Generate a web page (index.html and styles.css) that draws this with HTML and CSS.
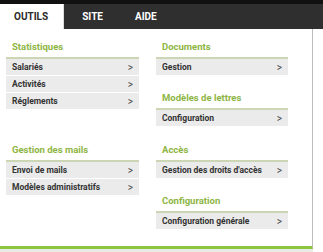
FILE: index.html
```html
<!DOCTYPE html>
<html lang="fr">
<head>
    <meta charset="UTF-8">
    <title>Menu</title>
    <link rel="stylesheet" href="styles.css">
</head>
<body>
<div class="topbar">
    <div class="nav">
        <a class="nav-tab active" href="#">OUTILS</a>
        <a class="nav-tab" href="#">SITE</a>
        <a class="nav-tab" href="#">AIDE</a>
    </div>
</div>
<div class="panel">
    <div class="menu-grid">
        <div class="menu-col">
            <div class="menu-section">
                <div class="menu-title">Statistiques</div>
                <a class="menu-item" href="#"><span>Salariés</span><span class="arrow">&gt;</span></a>
                <a class="menu-item" href="#"><span>Activités</span><span class="arrow">&gt;</span></a>
                <a class="menu-item" href="#"><span>Réglements</span><span class="arrow">&gt;</span></a>
            </div>
        </div>
        <div class="menu-col">
            <div class="menu-section">
                <div class="menu-title">Documents</div>
                <a class="menu-item" href="#"><span>Gestion</span><span class="arrow">&gt;</span></a>
            </div>
            <div class="menu-section">
                <div class="menu-title">Modèles de lettres</div>
                <a class="menu-item" href="#"><span>Configuration</span><span class="arrow">&gt;</span></a>
            </div>
        </div>
        <div class="menu-col">
            <div class="menu-section">
                <div class="menu-title">Gestion des mails</div>
                <a class="menu-item" href="#"><span>Envoi de mails</span><span class="arrow">&gt;</span></a>
                <a class="menu-item" href="#"><span>Modèles administratifs</span><span class="arrow">&gt;</span></a>
            </div>
        </div>
        <div class="menu-col">
            <div class="menu-section">
                <div class="menu-title">Accès</div>
                <a class="menu-item" href="#"><span>Gestion des droits d'accès</span><span class="arrow">&gt;</span></a>
            </div>
            <div class="menu-section">
                <div class="menu-title">Configuration</div>
                <a class="menu-item" href="#"><span>Configuration générale</span><span class="arrow">&gt;</span></a>
            </div>
        </div>
    </div>
</div>
<div class="under"></div>
</body>
</html>
```

FILE: styles.css
```css
body, html {
    margin: 0;
    padding: 0;
}
body {
    font-family: Roboto, Arial, sans-serif;
    color: #333;
    background: #fff;
}

/* barre du haut */
.topbar {
    background: #2f2f2f;
    border-top: 4px solid #111;
}
.nav {
    display: flex;
    height: 25px;
}
.nav-tab {
    display: flex;
    align-items: center;
    padding: 0 14px 0 18px;
    font-size: 10px;
    font-weight: 700;
    color: #fff;
    text-decoration: none;
}
.nav-tab.active {
    background: #fff;
    color: #2a2a2a;
    padding: 0 15px 0 14px;
    border-right: 1px solid #ddd;
}

/* panneau du menu */
.panel {
    width: 306px;
    padding: 12px 0 16px 6px;
    border-right: 1px solid #bdbdbd;
    border-bottom: 3px solid #8cc63f;
}
.menu-grid {
    display: grid;
    grid-template-columns: 133px 132px;
    column-gap: 17px;
    row-gap: 17px;
}
.menu-col {
    display: flex;
    flex-direction: column;
    gap: 16px;
}
.menu-title {
    font-size: 9.5px;
    font-weight: 700;
    line-height: 12px;
    color: #8db543;
    padding: 0 0 4px 6px;
    border-bottom: 2px solid #cdd6b4;
}
.menu-item {
    display: flex;
    justify-content: space-between;
    align-items: center;
    height: 16px;
    margin-bottom: 1px;
    padding: 0 6px;
    background: #ebebeb;
    font-size: 8.5px;
    font-weight: 700;
    color: #333;
    text-decoration: none;
}
.arrow {
    font-weight: 400;
    color: #444;
    font-size: 10px;
}
.under {
    height: 3px;
    width: 313px;
    background: #e9ece4;
}
```
